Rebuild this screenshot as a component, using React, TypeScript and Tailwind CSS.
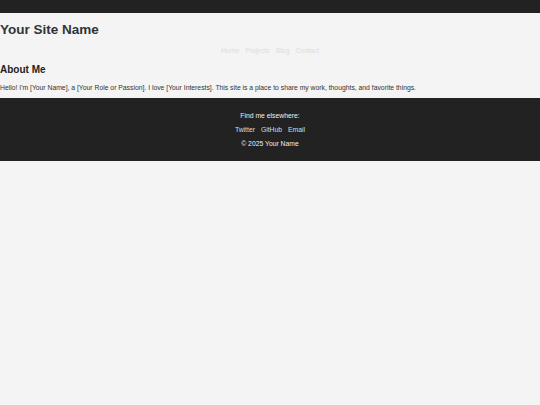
export default function App() {
  return (
    <div className="min-h-[405px] bg-[#f4f4f4] font-['Liberation_Sans',Arial,sans-serif] text-[6.8px] text-[#333]">
      <header className="h-[13px] bg-[#222]" />
      <main>
        <h1 className="mt-[9px] text-[13.5px] font-bold leading-[16px] text-[#333]">Your Site Name</h1>
        <nav className="mt-[9px] flex justify-center gap-[6px] leading-[8px] text-[#dcdcdc]">
          <a>Home</a>
          <a>Projects</a>
          <a>Blog</a>
          <a>Contact</a>
        </nav>
        <section className="mt-[9px]">
          <h2 className="text-[10px] font-bold leading-[12px] text-[#222]">About Me</h2>
          <p className="mt-[8px] leading-[8px] text-[#333]">
            Hello! I'm [Your Name], a [Your Role or Passion]. I love [Your Interests]. This site is a place to share my work, thoughts, and favorite things.
          </p>
        </section>
      </main>
      <footer className="mt-[6px] flex h-[63px] flex-col items-center justify-center gap-[6px] bg-[#222] text-[#eee]">
        <p className="leading-[8px]">Find me elsewhere:</p>
        <div className="flex gap-[6px] leading-[8px] text-[#ddd]">
          <a>Twitter</a>
          <a>GitHub</a>
          <a>Email</a>
        </div>
        <p className="leading-[8px]">© 2025 Your Name</p>
      </footer>
    </div>
  );
}
